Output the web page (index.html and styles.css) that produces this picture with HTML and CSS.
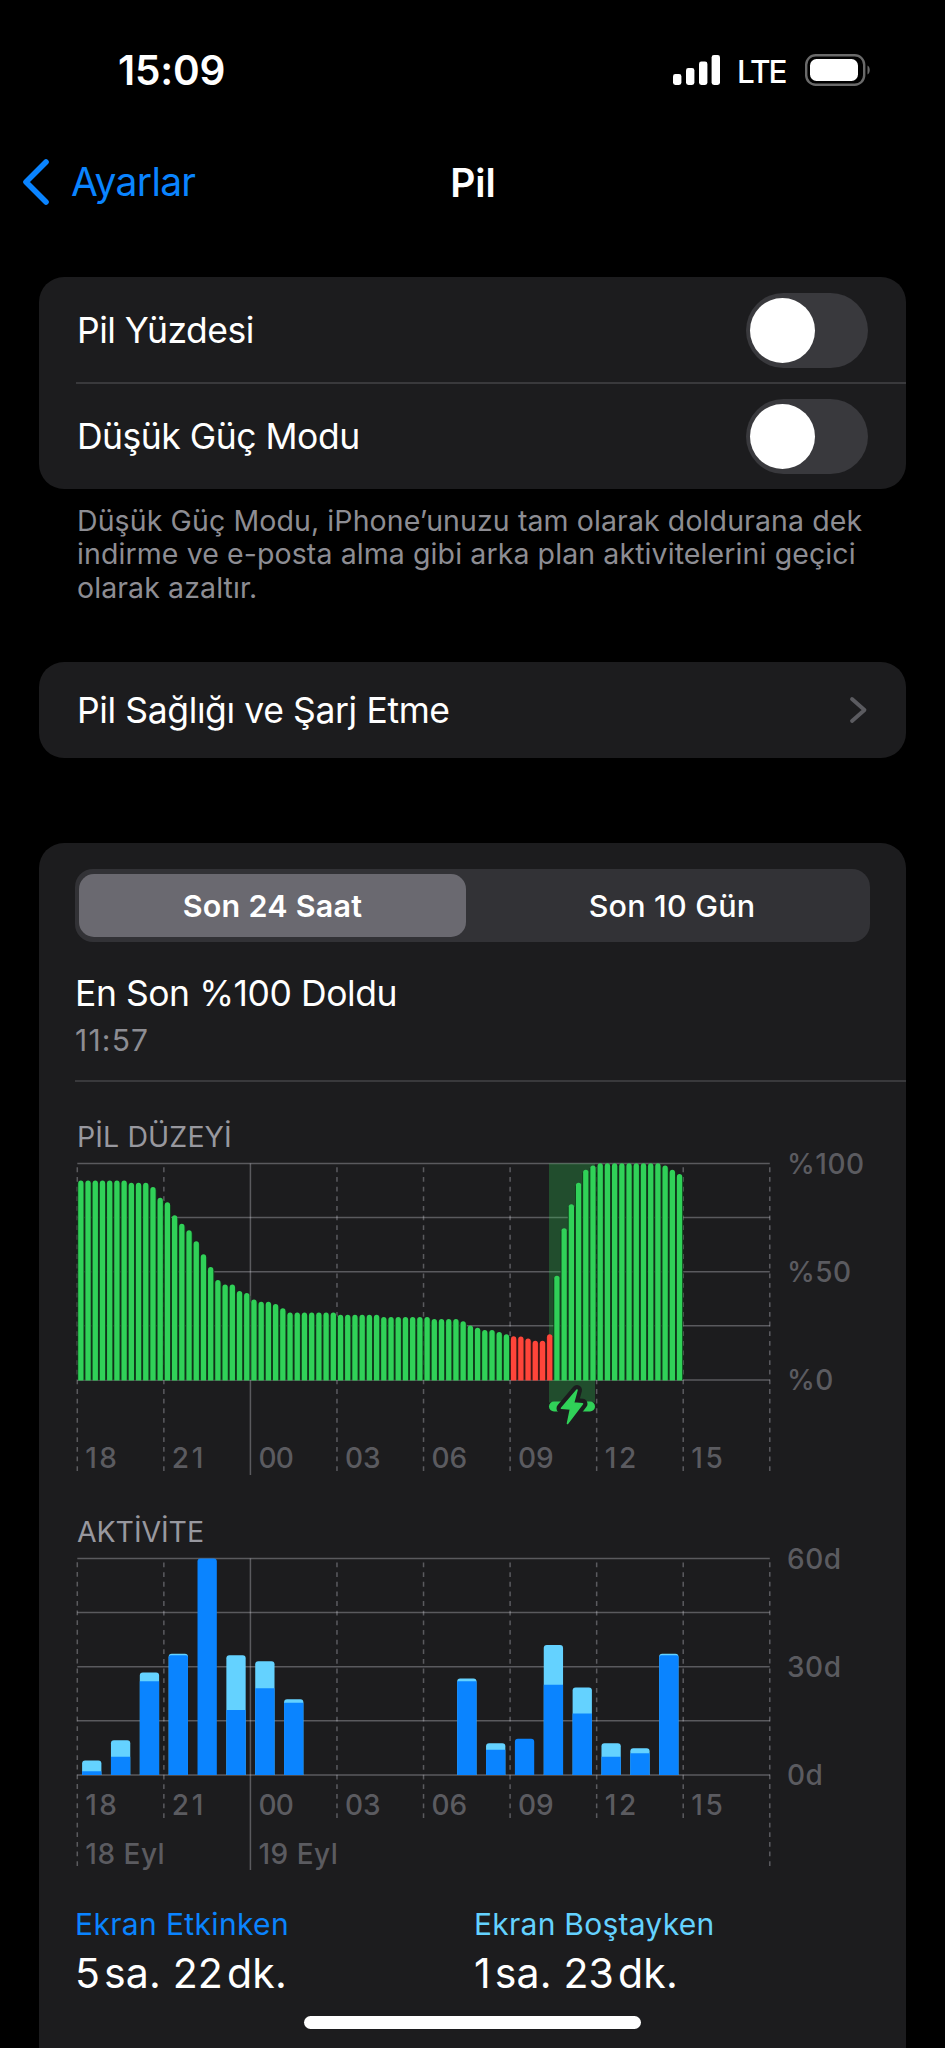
FILE: index.html
```
<!DOCTYPE html>
<html lang="tr">
<head>
   <meta charset="utf-8">
   <title>Pil</title>
   <link rel="stylesheet" href="styles.css">
</head>
<body>
<div class="screen">

   <div class="statusbar">
      <span class="time">15:09</span>
      <div class="status-right">
         <svg class="signal" width="48" height="32" viewBox="0 0 48 32">
            <rect x="0" y="20" width="8.4" height="11" rx="2.4"/>
            <rect x="13" y="14" width="8.4" height="17" rx="2.4"/>
            <rect x="26" y="7.5" width="8.4" height="23.5" rx="2.4"/>
            <rect x="38.6" y="1" width="8.4" height="30" rx="2.4"/>
         </svg>
         <span class="network">LTE</span>
         <svg class="battery" width="66" height="34" viewBox="0 0 66 34">
            <rect x="1.2" y="2.2" width="58" height="29.6" rx="9.5" fill="none" stroke="#6a6a6a" stroke-width="2.4"/>
            <rect x="5" y="6" width="48" height="22" rx="6.5" fill="#fff"/>
            <path d="M62.5 12.5c3 1.6 3 7.4 0 9z" fill="#6a6a6a"/>
         </svg>
      </div>
   </div>

   <div class="navbar">
      <a class="back">
         <svg width="28" height="46" viewBox="0 0 28 46"><path d="M24 3 4 23l20 20" fill="none" stroke="#0a84ff" stroke-width="5.600" stroke-linecap="round" stroke-linejoin="round"/></svg>
         <span>Ayarlar</span>
      </a>
      <h1>Pil</h1>
   </div>

   <div class="card">
      <div class="row first"><span>Pil Yüzdesi</span><span class="switch"></span></div>
      <div class="line"></div>
      <div class="row"><span>Düşük Güç Modu</span><span class="switch"></span></div>
   </div>
   <p class="footnote">Düşük Güç Modu, iPhone’unuzu tam olarak doldurana dek<br>indirme ve e-posta alma gibi arka plan aktivitelerini geçici<br>olarak azaltır.</p>

   <div class="card health">
      <div class="row"><span>Pil Sağlığı ve Şarj Etme</span>
         <svg width="19" height="28" viewBox="0 0 19 28"><path d="M3 3l12.500 11L3 25" fill="none" stroke="#5b5b60" stroke-width="3.800" stroke-linecap="round" stroke-linejoin="round"/></svg>
      </div>
   </div>

   <div class="card usage">
      <div class="segments">
         <span class="seg active">Son 24 Saat</span>
         <span class="seg">Son 10 Gün</span>
      </div>
      <div class="last-charge">
         <div class="title">En Son %100 Doldu</div>
         <div class="sub">11:57</div>
      </div>
      <div class="line"></div>
      <h2>PİL DÜZEYİ</h2>
      <svg class="chart" id="level" width="867" height="330" viewBox="0 0 867 330"></svg>
      <h2 class="t-activity">AKTİVİTE</h2>
      <svg class="chart" id="activity" width="867" height="330" viewBox="0 0 867 330"></svg>
      <div class="totals">
         <div class="total">
            <div class="label on">Ekran Etkinken</div>
            <div class="value">5<i></i>sa. 22<i></i>dk.</div>
         </div>
         <div class="total">
            <div class="label idle">Ekran Boştayken</div>
            <div class="value">1<i></i>sa. 23<i></i>dk.</div>
         </div>
      </div>
   </div>

   <div class="home"></div>
</div>
<script src="charts.js"></script>
</body>
</html>
```
FILE: styles.css
```
body {
   margin: 0;
   background: #000;
   color: #fff;
   font-family: Inter, "Liberation Sans", sans-serif;
}
.screen {
   position: relative;
   width: 945px;
   height: 2048px;
   overflow: hidden;
}
h1, h2, p {
   margin: 0;
   font-weight: 400;
}

/* Status bar */
.statusbar {
   display: flex;
   justify-content: space-between;
   align-items: center;
   height: 140px;
   padding: 0 74px 0 118px;
   box-sizing: border-box;
}
.time {
   font-size: 40.500px;
   font-weight: 600;
   letter-spacing: -0.2px;
}
.status-right {
   display: flex;
   align-items: center;
}
.signal {
   fill: #fff;
}
.network {
   margin: 3px 19.500px 0 16.500px;
   font-size: 31.500px;
   font-weight: 500;
   letter-spacing: -2px;
}

/* Navigation */
.navbar {
   display: grid;
   grid-template-columns: 1fr auto 1fr;
   align-items: center;
   height: 84px;
   padding: 0 22px;
   margin-bottom: 53px;
}
.back {
   display: flex;
   align-items: center;
   gap: 21px;
   color: #0a84ff;
   font-size: 39px;
   letter-spacing: -0.700px;
}
.back span {
   margin-top: -1px;
}
h1 {
   padding-left: 1px;
   font-size: 39px;
   font-weight: 600;
}

/* Grouped cards */
.card {
   margin: 0 39px;
   background: #1c1c1e;
   border-radius: 25px;
}
.row {
   display: flex;
   align-items: center;
   justify-content: space-between;
   height: 105px;
   padding: 0 38px;
   font-size: 35.500px;
   letter-spacing: -0.500px;
}
.row.first {
   height: 103.500px;
   padding-top: 1.500px;
}
.line {
   height: 1.500px;
   margin-left: 37px;
   background: #39393c;
}
.switch {
   width: 122px;
   height: 75px;
   border-radius: 38px;
   background: #39393d;
   display: flex;
   align-items: center;
}
.switch::before {
   content: "";
   width: 65px;
   height: 65px;
   margin-left: 4px;
   border-radius: 50%;
   background: #fff;
}
.footnote {
   margin: 15px 0 0 77px;
   font-size: 28.500px;
   line-height: 33.700px;
   letter-spacing: 0.100px;
   color: #8d8d93;
   white-space: nowrap;
}
.health {
   margin-top: 57.400px;
}
.health .row {
   height: 96px;
   letter-spacing: -0.380px;
}
.usage {
   margin-top: 85px;
   padding-top: 26px;
   height: 1250px;
}

.segments {
   display: flex;
   margin: 0 36px;
   padding: 5px 4px;
   height: 63px;
   border-radius: 18px;
   background: #323236;
}
.seg {
   flex: 1;
   padding-left: 12px;
   border-radius: 15px;
   font-size: 30.500px;
   font-weight: 500;
   line-height: 63px;
   letter-spacing: 0.200px;
   text-align: center;
}
.seg.active {
   flex: 0 0 387px;
   padding-left: 0;
   background: #6a6970;
   font-weight: 600;
   letter-spacing: 0.250px;
}
.last-charge {
   height: 138px;
   padding-left: 36px;
}
.title {
   padding-top: 30px;
   font-size: 35.500px;
   line-height: 43px;
   letter-spacing: -0.450px;
}
.sub {
   margin-top: 6px;
   font-size: 30px;
   line-height: 38px;
   letter-spacing: 1.200px;
   color: #8d8d93;
}
.usage .line {
   margin-left: 36px;
}

/* Charts */
h2 {
   height: 43px;
   padding: 37px 0 0 38px;
   font-size: 28.500px;
   line-height: 36px;
   letter-spacing: 0.100px;
   color: #98989f;
}
h2.t-activity {
   height: 43.500px;
   padding-top: 22px;
   letter-spacing: -0.100px;
}
.chart {
   display: block;
   overflow: visible;
   font-size: 28px;
   font-weight: 500;
   letter-spacing: 0.500px;
}
.chart text {
   fill: #5b5b60;
}
.chart .grid {
   stroke: #ebebf5;
   stroke-opacity: 0.3;
   stroke-width: 1.500;
}
.chart .dash {
   stroke-dasharray: 4.800 4.840;
}

.totals {
   display: grid;
   grid-template-columns: 399px 1fr;
   margin: 17.500px 0 0 36px;
}
.label {
   font-size: 30px;
   line-height: 38px;
   letter-spacing: 0.350px;
}
.idle {
   letter-spacing: 0.250px;
}
.on {
   color: #0a84ff;
}
.idle {
   color: #64d2ff;
}
.value {
   margin-top: 4px;
   font-size: 41px;
   line-height: 52px;
   letter-spacing: 0.150px;
}
.value i {
   display: inline-block;
   width: 4px;
}

.home {
   position: absolute;
   left: 304px;
   bottom: 19px;
   width: 337px;
   height: 13px;
   border-radius: 7px;
   background: #fff;
}
```
FILE: charts.js
```
var NS = "http://www.w3.org/2000/svg";
var LEFT = 38.3, STEP = 86.56, TOP = 1.5, H = 216.4;

function add(svg, name, attrs, text) {
   var el = document.createElementNS(NS, name);
   for (var k in attrs) el.setAttribute(k, attrs[k]);
   if (text) el.textContent = text;
   svg.appendChild(el);
   return el;
}

function drawGrid(svg, ends) {
   for (var i = 0; i < 5; i++) {
      var y = TOP + H * i / 4;
      add(svg, "line", {"class": "grid", x1: LEFT, x2: LEFT + STEP * 8, y1: y, y2: y});
   }
   // dashes run upwards so each line ends on a full dash
   for (i = 0; i < 9; i++) {
      var x = LEFT + STEP * i;
      add(svg, "line", {"class": i == 2 ? "grid" : "grid dash", x1: x, x2: x, y1: ends[i], y2: TOP});
   }
}

function drawLabels(svg, hourY, right) {
   var hours = ["18", "21", "00", "03", "06", "09", "12", "15"];
   for (var i = 0; i < 8; i++) {
      add(svg, "text", {x: LEFT + STEP * i + 8, y: hourY, textLength: hours[i].charAt(0) == "0" ? 36 : 32}, hours[i]);
   }
   for (i = 0; i < 3; i++) {
      add(svg, "text", {x: 748, y: TOP + H * i / 2 + 10.5}, right[i]);
   }
}

// battery level, one value every 15 minutes
var level = [92,92,92,92,92,92,92,91,91,91,89,84,82,76,72,69,64,58,52,46,44,44,41,40,
   37,36,36,35,33,31,31,31,31,31,31,31,30,30,30,30,30,30,29,29,29,29,29,29,
   29,28,28,28,28,27,25,24,23,23,22,21,20,20,19,18,18,21,48,70,81,91,97,99,
   100,100,100,100,100,100,100,100,100,99,97,95];
var svg = document.getElementById("level");
drawGrid(svg, [309, 309, 313, 309, 309, 309, 309, 309, 309]);
add(svg, "rect", {x: 510, y: TOP, width: 46, height: 239, fill: "#30d158", "fill-opacity": 0.27});
for (var i = 0; i < level.length; i++) {
   var x = LEFT + 0.9 + i * STEP / 12, h = level[i] * H / 100, y = TOP + H - h;
   var red = i > 59 && i < 66;
   add(svg, "rect", {x: x - 0.9, y: y + 2.5, width: 7.2, height: h - 2.5, fill: red ? "#4a1815" : "#103a1b"});
   add(svg, "path", {
      d: "M" + x + " " + (TOP + H + 0.7) + "V" + (y + 2.4) + "a2.65 2.65 0 0 1 5.3 0V" + (TOP + H + 0.7) + "z",
      fill: red ? "#ff453a" : "#30d158"
   });
}
// charging marker
add(svg, "rect", {x: 510, y: 239.5, width: 46, height: 10, rx: 5, fill: "#30d158"});
var bolt = "M538 228L522.500 246.300L531.500 247L528.500 261.500L543.500 241.800L534.500 241Z";
add(svg, "path", {d: bolt, fill: "#1c1c1e", stroke: "#1c1c1e", "stroke-width": 10, "stroke-linejoin": "round"});
add(svg, "path", {d: bolt, fill: "#30d158", stroke: "#30d158", "stroke-width": 1.6, "stroke-linejoin": "round"});
drawLabels(svg, 306, ["%100", "%50", "%0"]);

// minutes per hour: [screen on, total]
var activity = [[1,4],[5,9.6],[26,28.4],[33.200,33.600],[60,60],[18,33.200],[24,31.500],[20,21],
   0,0,0,0,0,[26,26.700],[7,8.800],[10,10],[25,36],[17,24.200],[5,8.800],[6,7.400],[33.200,33.600]];
svg = document.getElementById("activity");
drawGrid(svg, [309, 261, 313, 261, 261, 261, 261, 261, 309]);
for (i = 0; i < activity.length; i++) {
   if (!activity[i]) continue;
   x = LEFT + 4.8 + i * STEP / 3;
   var on = activity[i][0] * H / 60, total = activity[i][1] * H / 60, b = TOP + H;
   var bar = "M" + x + " " + b + "v" + (3 - total) + "q0-3 3-3h13.3q3 0 3 3V" + b + "z";
   add(svg, "path", {d: bar, fill: on == total ? "#0a84ff" : "#64d2ff"});
   if (on != total) {
      var r = total - on < 2 ? 2 : 0;
      add(svg, "path", {d: "M" + x + " " + b + "v" + (r - on) + "q0-" + r + " " + r + "-" + r + "h" + (19.3 - 2 * r) + "q" + r + " 0 " + r + " " + r + "V" + b + "z", fill: "#0a84ff"});
   }
}
drawLabels(svg, 257.5, ["60d", "30d", "0d"]);
add(svg, "text", {x: LEFT + 8, y: 306.5}, "18 Eyl");
add(svg, "text", {x: LEFT + STEP * 2 + 8, y: 306.5}, "19 Eyl");
```
